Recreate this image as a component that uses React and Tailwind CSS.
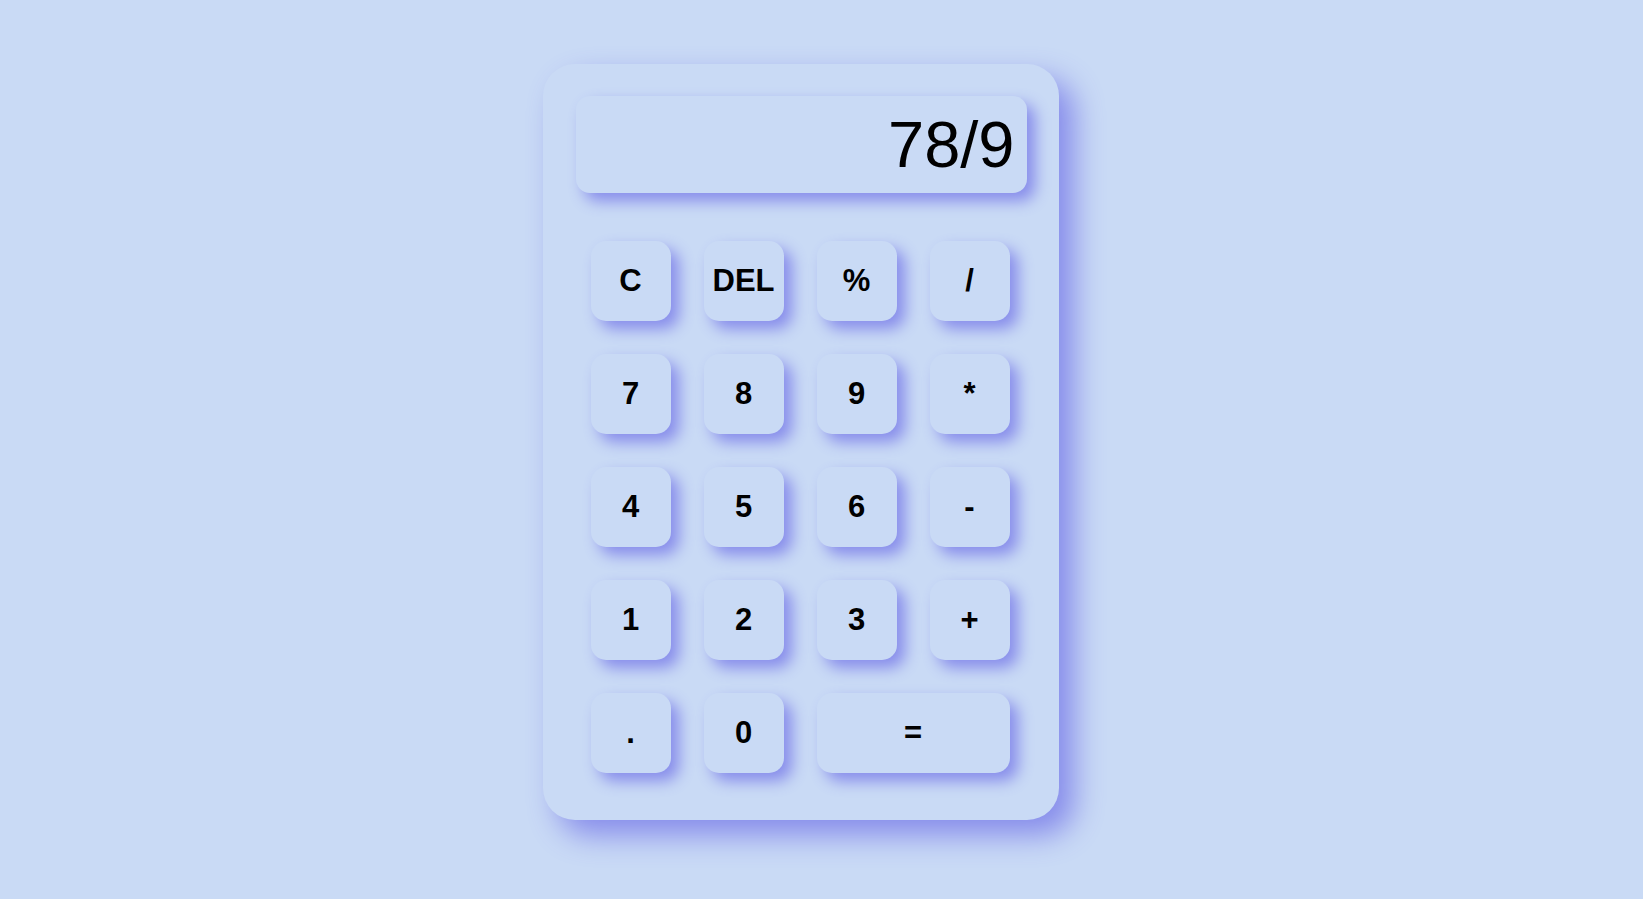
import React from "react";

const keys = [
  ["C", "DEL", "%", "/"],
  ["7", "8", "9", "*"],
  ["4", "5", "6", "-"],
  ["1", "2", "3", "+"],
];

function Key({ label, wide }) {
  return (
    <button
      className={`${wide ? "col-span-2" : ""} h-[80px] rounded-[15px] bg-[#c9daf5] text-[31px] font-bold text-black shadow-[8px_8px_15px_#878ceb] flex items-center justify-center`}
    >
      {label}
    </button>
  );
}

export default function App() {
  return (
    <div
      className="w-full min-h-[899px] bg-[#c9daf5] flex justify-center pr-[42px] pt-[64px]"
      style={{ fontFamily: '"Liberation Sans", Arial, sans-serif' }}
    >
      <div className="w-[516px] h-[756px] rounded-[32px] bg-[#c9daf5] shadow-[15px_15px_30px_#868beb] pt-[32px] pl-[33px] pr-[32px] flex flex-col">
        <div className="h-[97px] rounded-[14px] bg-[#c9daf5] shadow-[8px_8px_15px_#878ceb] flex items-center justify-end pr-[12px] text-[65px] text-black leading-none">
          78/9
        </div>
        <div className="mt-[48px] px-[15px] grid grid-cols-[80px_80px_80px_80px] gap-[33px]">
          {keys.flat().map((k) => (
            <Key key={k} label={k} />
          ))}
          <Key label="." />
          <Key label="0" />
          <Key label="=" wide />
        </div>
      </div>
    </div>
  );
}
